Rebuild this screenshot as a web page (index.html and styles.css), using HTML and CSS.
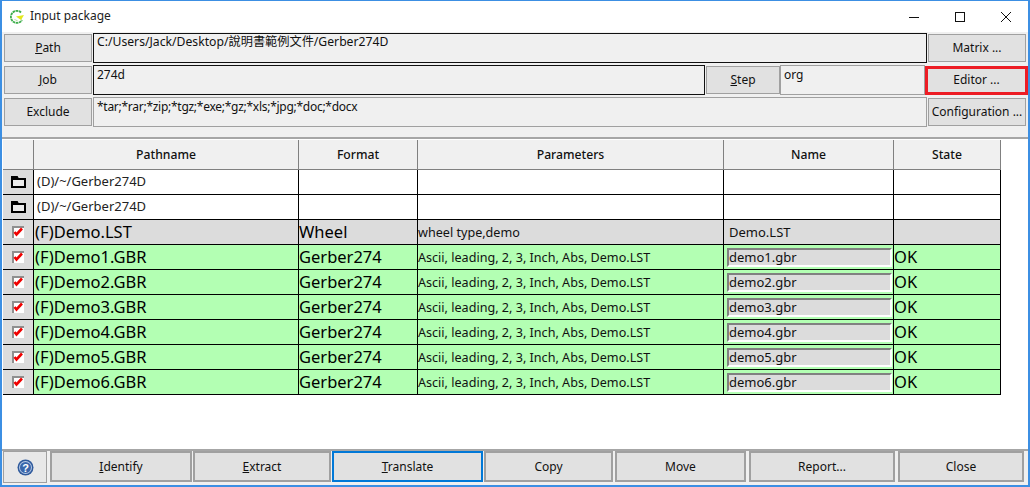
FILE: index.html
```html
<!DOCTYPE html>
<html lang="en">
<head>
<meta charset="utf-8">
<title>Input package</title>
<link rel="stylesheet" href="styles.css">
</head>
<body>
<div class="window">
  <header class="titlebar">
    <svg class="app-icon" width="15" height="14" viewBox="0 0 15 14"><path d="M11 2.500A6 6 0 1 0 12 10" fill="none" stroke="#3fae4c" stroke-width="1.800" stroke-dasharray="2.500 .6"/><path d="M6 6.500l8-1.500-3 5z" fill="#e3e81c"/><path d="M4.500 9a3 3 0 0 0 3 1.500" fill="none" stroke="#b7dca0" stroke-width="1"/></svg>
    <span class="title">Input package</span>
    <div class="win-controls">
      <svg width="12" height="12" viewBox="0 0 12 12"><path d="M1 6.500h10" stroke="#111" fill="none"/></svg>
      <svg width="12" height="12" viewBox="0 0 12 12"><rect x="1.500" y="1.500" width="9" height="9" stroke="#111" fill="none"/></svg>
      <svg width="12" height="12" viewBox="0 0 12 12"><path d="M1 1l10 10M11 1L1 11" stroke="#111" fill="none"/></svg>
    </div>
  </header>
  <section class="form">
    <div class="form-row">
      <button class="btn side"><u>P</u>ath</button>
      <div class="field dark wide path-field">C:/Users/Jack/Desktop/說明書範例文件/Gerber274D</div>
      <button class="btn right">Matrix ...</button>
    </div>
    <div class="form-row">
      <button class="btn side"><u>J</u>ob</button>
      <div class="field dark job">274d</div>
      <button class="btn step"><u>S</u>tep</button>
      <div class="field org">org</div>
      <button class="btn editor">Editor ...</button>
    </div>
    <div class="form-row">
      <button class="btn side">Exclude</button>
      <div class="field wide exclude">*tar;*rar;*zip;*tgz;*exe;*gz;*xls;*jpg;*doc;*docx</div>
      <button class="btn right">Configuration ...</button>
    </div>
  </section>
  <main class="table-area">
    <div class="grid">
      <div class="row head"><div class="cell"></div><div class="cell">Pathname</div><div class="cell">Format</div><div class="cell">Parameters</div><div class="cell">Name</div><div class="cell">State</div></div>
      <div class="row dir">
        <div class="cell mark"><svg class="folder" width="15" height="12" viewBox="0 0 15 12"><path d="M1 1h5l1 2h7v8H1z" fill="#ececec" stroke="#000" stroke-width="2"/><path d="M1 3h13" stroke="#000" stroke-width="2"/></svg></div>
        <div class="cell path">(D)/~/Gerber274D</div><div class="cell"></div><div class="cell"></div><div class="cell"></div><div class="cell"></div>
      </div>
      <div class="row dir">
        <div class="cell mark"><svg class="folder" width="15" height="12" viewBox="0 0 15 12"><path d="M1 1h5l1 2h7v8H1z" fill="#ececec" stroke="#000" stroke-width="2"/><path d="M1 3h13" stroke="#000" stroke-width="2"/></svg></div>
        <div class="cell path">(D)/~/Gerber274D</div><div class="cell"></div><div class="cell"></div><div class="cell"></div><div class="cell"></div>
      </div>
      <div class="row gray">
        <div class="cell mark"><svg class="check" width="12" height="12" viewBox="0 0 12 12"><rect width="12" height="12" fill="#8f8f8f"/><rect x="2" y="2" width="10" height="10" fill="#fff"/><path d="M2.500 6l2 2.500 5.500-6" fill="none" stroke="#f00000" stroke-width="2.600"/></svg></div>
        <div class="cell big">(F)Demo.LST</div><div class="cell big">Wheel</div><div class="cell params">wheel type,demo</div><div class="cell plain">Demo.LST</div><div class="cell"></div>
      </div>
      <div class="row ok">
        <div class="cell mark"><svg class="check" width="12" height="12" viewBox="0 0 12 12"><rect width="12" height="12" fill="#8f8f8f"/><rect x="2" y="2" width="10" height="10" fill="#fff"/><path d="M2.500 6l2 2.500 5.500-6" fill="none" stroke="#f00000" stroke-width="2.600"/></svg></div>
        <div class="cell big">(F)Demo1.GBR</div><div class="cell big">Gerber274</div><div class="cell params">Ascii, leading, 2, 3, Inch, Abs, Demo.LST</div><div class="cell name"><span class="name-box">demo1.gbr</span></div><div class="cell big">OK</div>
      </div>
      <div class="row ok">
        <div class="cell mark"><svg class="check" width="12" height="12" viewBox="0 0 12 12"><rect width="12" height="12" fill="#8f8f8f"/><rect x="2" y="2" width="10" height="10" fill="#fff"/><path d="M2.500 6l2 2.500 5.500-6" fill="none" stroke="#f00000" stroke-width="2.600"/></svg></div>
        <div class="cell big">(F)Demo2.GBR</div><div class="cell big">Gerber274</div><div class="cell params">Ascii, leading, 2, 3, Inch, Abs, Demo.LST</div><div class="cell name"><span class="name-box">demo2.gbr</span></div><div class="cell big">OK</div>
      </div>
      <div class="row ok">
        <div class="cell mark"><svg class="check" width="12" height="12" viewBox="0 0 12 12"><rect width="12" height="12" fill="#8f8f8f"/><rect x="2" y="2" width="10" height="10" fill="#fff"/><path d="M2.500 6l2 2.500 5.500-6" fill="none" stroke="#f00000" stroke-width="2.600"/></svg></div>
        <div class="cell big">(F)Demo3.GBR</div><div class="cell big">Gerber274</div><div class="cell params">Ascii, leading, 2, 3, Inch, Abs, Demo.LST</div><div class="cell name"><span class="name-box">demo3.gbr</span></div><div class="cell big">OK</div>
      </div>
      <div class="row ok">
        <div class="cell mark"><svg class="check" width="12" height="12" viewBox="0 0 12 12"><rect width="12" height="12" fill="#8f8f8f"/><rect x="2" y="2" width="10" height="10" fill="#fff"/><path d="M2.500 6l2 2.500 5.500-6" fill="none" stroke="#f00000" stroke-width="2.600"/></svg></div>
        <div class="cell big">(F)Demo4.GBR</div><div class="cell big">Gerber274</div><div class="cell params">Ascii, leading, 2, 3, Inch, Abs, Demo.LST</div><div class="cell name"><span class="name-box">demo4.gbr</span></div><div class="cell big">OK</div>
      </div>
      <div class="row ok">
        <div class="cell mark"><svg class="check" width="12" height="12" viewBox="0 0 12 12"><rect width="12" height="12" fill="#8f8f8f"/><rect x="2" y="2" width="10" height="10" fill="#fff"/><path d="M2.500 6l2 2.500 5.500-6" fill="none" stroke="#f00000" stroke-width="2.600"/></svg></div>
        <div class="cell big">(F)Demo5.GBR</div><div class="cell big">Gerber274</div><div class="cell params">Ascii, leading, 2, 3, Inch, Abs, Demo.LST</div><div class="cell name"><span class="name-box">demo5.gbr</span></div><div class="cell big">OK</div>
      </div>
      <div class="row ok">
        <div class="cell mark"><svg class="check" width="12" height="12" viewBox="0 0 12 12"><rect width="12" height="12" fill="#8f8f8f"/><rect x="2" y="2" width="10" height="10" fill="#fff"/><path d="M2.500 6l2 2.500 5.500-6" fill="none" stroke="#f00000" stroke-width="2.600"/></svg></div>
        <div class="cell big">(F)Demo6.GBR</div><div class="cell big">Gerber274</div><div class="cell params">Ascii, leading, 2, 3, Inch, Abs, Demo.LST</div><div class="cell name"><span class="name-box">demo6.gbr</span></div><div class="cell big">OK</div>
      </div>
    </div>
  </main>
  <footer class="footer">
    <button class="help"><svg width="17" height="17" viewBox="0 0 17 17"><circle cx="8.500" cy="8.500" r="8" fill="#2f5a9c"/><circle cx="8.500" cy="8.500" r="6.500" fill="#b9cbe6"/><circle cx="8.500" cy="8.500" r="5.500" fill="#3a66ab"/><text class="q" x="8.500" y="12.500" text-anchor="middle">?</text></svg></button>
    <button class="btn f-identify"><u>I</u>dentify</button>
    <button class="btn f-extract"><u>E</u>xtract</button>
    <button class="btn f-translate active"><u>T</u>ranslate</button>
    <button class="btn f-copy">Copy</button>
    <button class="btn f-move">Move</button>
    <button class="btn f-report">Report...</button>
    <button class="btn f-close">Close</button>
  </footer>
</div>
</body>
</html>
```
FILE: styles.css
```css
* { box-sizing: border-box; }
html, body { margin: 0; padding: 0; }
body { width: 1030px; height: 487px; overflow: hidden; font-family: "Noto Sans", "Noto Sans CJK TC", sans-serif; font-size: 12px; color: #111; }
.window { width: 1030px; height: 487px; border: 2px solid #3c8fe3; border-top-width: 1px; display: flex; flex-direction: column; background: #fff; }
.titlebar { height: 31px; flex: none; display: flex; align-items: center; padding-left: 8px; background: #fff; }
.app-icon { margin-right: 5px; }
.title { font-size: 12px; color: #222; margin-bottom: 2px; }
.win-controls { margin-left: auto; display: flex; gap: 34px; padding-right: 16px; }
.form { height: 107px; flex: none; background: #f0f0f0; border-bottom: 2px solid #a6a6a6; padding-top: 1px; display: flex; flex-direction: column; gap: 2px; }
.form-row { display: flex; height: 30px; align-items: stretch; }
.btn { font: inherit; font-size: 12px; color: #111; background: #e1e1e1; border: 1px solid #a0a0a0; padding: 0 0 2px; margin: 0; }
.side { width: 88px; margin: 1px 0 1px 2px; }
.right { width: 98px; margin: 1px 0 1px 1px; }
.field { margin-left: 1px; background: #f0f0f0; border: 1px solid #a0a0a0; padding: 1px 3px; line-height: 16px; font-size: 12px; white-space: nowrap; }
.field.dark { border-color: #111; }
.path-field { font-size: 12.200px; padding-top: 0; line-height: 15px; }
.exclude { letter-spacing: -0.270px; }
.wide { width: 834px; }
.job { width: 612px; }
.step { width: 74px; margin: 1px 0 1px 1px; }
.org { width: 145px; margin-left: 0; }
.editor { width: 103px; margin: 1px 0 0 0; border: 3px solid #ed1c24; }
.table-area { flex: 1; min-height: 0; background: #fff; padding: 1px 0 0 1px; }
.grid { display: flex; flex-direction: column; width: 998px; }
.row { display: grid; grid-template-columns: 31px 265px 119px 306px 170px 107px; height: 25px; border-bottom: 1px solid #000; }
.cell { border-right: 1px solid #000; display: flex; align-items: center; padding-left: 0; white-space: nowrap; min-width: 0; overflow: hidden; }
.row.head { height: 30px; background: #f0f0f0; border-bottom: 1px solid #808080; }
.head .cell { justify-content: center; padding: 0; border-right: 1px solid #808080; font-weight: 500; font-size: 12.200px; }
.mark { justify-content: center; padding: 0; background: #dcdcdc; }
.row.dir { background: #fff; }
.row.dir .path { font-size: 13px; padding: 0 0 2px 3px; color: #222; }
.row.gray { background: #dcdcdc; }
.row.ok { background: #b3ffb3; }
.big { font-size: 16.500px; color: #000; padding-bottom: 2px; }
.row > .big:nth-child(2) { padding-left: 1px; }
.params { font-size: 12.600px; color: #111; }
.plain { padding-left: 5px; font-size: 13px; }
.name { padding: 0 1px 0 3px; }
.name-box { display: block; width: 100%; height: 19px; line-height: 14px; background: #dcdcdc; border: 2px solid #fff; border-top-color: #808080; border-left-color: #808080; padding-left: 0; font-size: 13px; }
.footer { height: 36px; flex: none; background: #f0f0f0; border-top: 2px solid #a6a6a6; display: flex; align-items: flex-start; padding-left: 1px; }
.footer .btn { height: 31px; border-width: 2px; padding: 0; }
.help { width: 44px; height: 32px; padding: 0; background: #e8e8e8; border: 1px solid #a0a0a0; margin-right: 3px; display: flex; align-items: center; justify-content: center; }
.q { font: bold 11px "Liberation Sans", sans-serif; fill: #fff; }
.f-identify { width: 142px; }
.f-extract { width: 138px; margin-left: 1px; }
.f-translate { width: 151px; margin-left: 1px; }
.f-copy { width: 129px; margin-left: 1px; }
.f-move { width: 131px; margin-left: 2px; }
.f-report { width: 146px; margin-left: 3px; }
.f-close { width: 126px; margin-left: 3px; }
.btn.active { border-color: #0078d7; }
.folder, .check { display: block; }
```
